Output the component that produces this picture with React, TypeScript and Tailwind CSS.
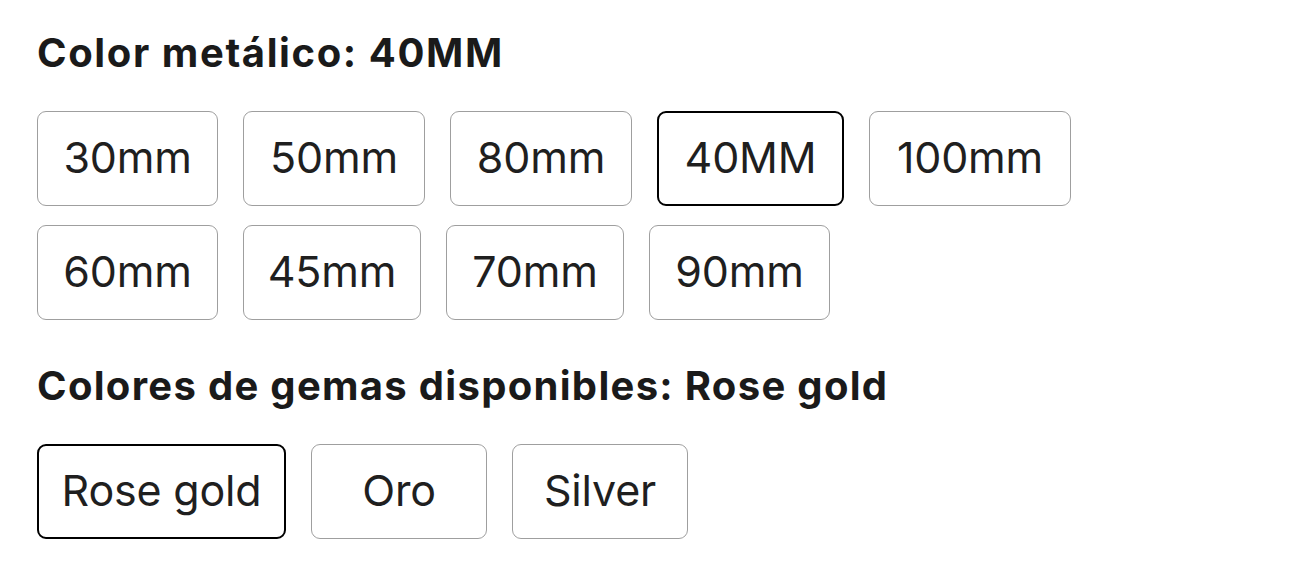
import React from "react";

type Opt = { label: string; w: string; selected?: boolean };

const row1: Opt[] = [
  { label: "30mm", w: "w-[181px]" },
  { label: "50mm", w: "w-[182px]" },
  { label: "80mm", w: "w-[182px]" },
  { label: "40MM", w: "w-[187px]", selected: true },
  { label: "100mm", w: "w-[202px]" },
];
const row2: Opt[] = [
  { label: "60mm", w: "w-[181px]" },
  { label: "45mm", w: "w-[178px]" },
  { label: "70mm", w: "w-[178px]" },
  { label: "90mm", w: "w-[181px]" },
];
const row3: Opt[] = [
  { label: "Rose gold", w: "w-[249px]", selected: true },
  { label: "Oro", w: "w-[176px]" },
  { label: "Silver", w: "w-[176px]" },
];

function Chip({ o }: { o: Opt }) {
  return (
    <div
      className={
        "h-[95px] rounded-[9px] flex items-center justify-center bg-white text-[#1f1f1f] " +
        o.w +
        " " +
        (o.selected ? "border-2 border-black" : "border border-[#9f9f9f]")
      }
    >
      <span className="inline-block text-[43px] leading-none pb-[3px] tracking-[-0.2px]">{o.label}</span>
    </div>
  );
}

export default function App() {
  return (
    <div
      className="w-[1290px] h-[573px] bg-white pl-[37px] pt-[29px]"
      style={{ fontFamily: "Inter, 'Liberation Sans', sans-serif" }}
    >
      <h2 className="text-[40px] font-bold leading-[48px] text-[#1a1a1a] tracking-[1.6px]">
        Color metálico: 40MM
      </h2>
      <div className="mt-[34px] flex flex-col gap-[19px]">
        <div className="flex gap-[25px]">
          {row1.map((o) => (
            <Chip key={o.label} o={o} />
          ))}
        </div>
        <div className="flex gap-[25px]">
          {row2.map((o) => (
            <Chip key={o.label} o={o} />
          ))}
        </div>
      </div>
      <h2 className="mt-[42px] text-[40px] font-bold leading-[48px] text-[#1a1a1a] tracking-[1.3px]">
        Colores de gemas disponibles: Rose gold
      </h2>
      <div className="mt-[34px] flex gap-[25px]">
        {row3.map((o) => (
          <Chip key={o.label} o={o} />
        ))}
      </div>
    </div>
  );
}
